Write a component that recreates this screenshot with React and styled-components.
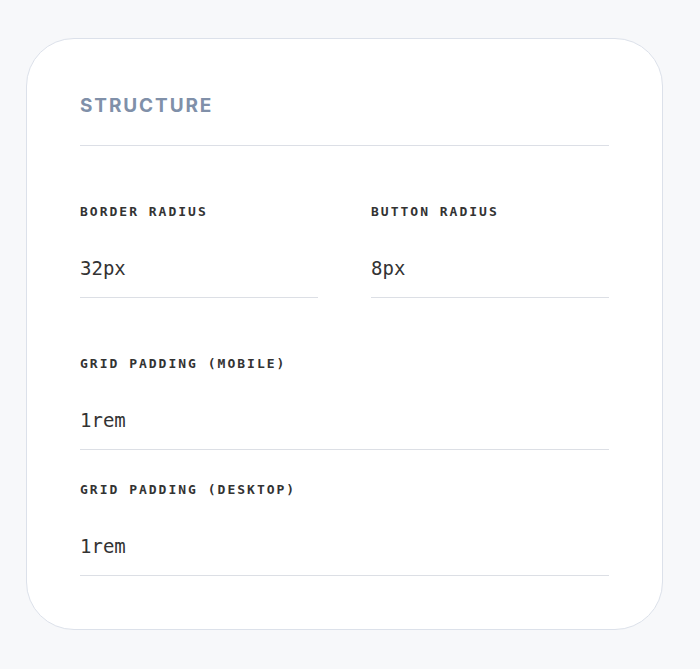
import React from 'react'
import styled, { createGlobalStyle } from 'styled-components'

const GlobalStyle = createGlobalStyle`
  html, body {
    margin: 0;
    padding: 0;
    background: #f7f8fa;
  }
  body {
    font-family: 'Inter', 'Liberation Sans', sans-serif;
  }
`

const Page = styled.div`
  padding: 38px 37px 39px 26px;
`

const Card = styled.section`
  background: #ffffff;
  border: 1px solid #dce1ea;
  border-radius: 48px;
  padding: 55px 53px 53px;
`

const SectionHeader = styled.div`
  border-bottom: 1px solid #dcdfe6;
  padding-bottom: 28px;
  margin-bottom: 56px;
`

const Heading = styled.h2`
  margin: 0;
  font-family: 'Inter', 'Liberation Sans', sans-serif;
  font-size: 19px;
  line-height: 23px;
  font-weight: 700;
  letter-spacing: 0.1em;
  color: #8090a9;
  text-transform: uppercase;
`

const Row = styled.div`
  display: grid;
  grid-template-columns: 1fr 1fr;
  column-gap: 53px;
  margin-bottom: 56px;
`

const Stack = styled.div`
  display: flex;
  flex-direction: column;
  gap: 30px;
`

const Field = styled.label`
  display: flex;
  flex-direction: column;
`

const Label = styled.span`
  font-family: 'DejaVu Sans Mono', 'Liberation Mono', monospace;
  font-size: 13px;
  line-height: 19px;
  font-weight: 700;
  letter-spacing: 2px;
  color: #333333;
  text-transform: uppercase;
  margin-bottom: 17px;
`

const Input = styled.input`
  font-family: 'DejaVu Sans Mono', 'Liberation Mono', monospace;
  font-size: 19px;
  line-height: 28px;
  color: #333333;
  background: transparent;
  border: none;
  border-bottom: 1.5px solid #dcdfe5;
  padding: 16px 0 15px;
  margin: 0;
  outline: none;
  width: 100%;
  box-sizing: border-box;
`

const FormField = ({ label, value }) => (
  <Field>
    <Label>{label}</Label>
    <Input defaultValue={value} />
  </Field>
)

export default function App() {
  return (
    <Page>
      <GlobalStyle />
      <Card>
        <SectionHeader>
          <Heading>Structure</Heading>
        </SectionHeader>
        <Row>
          <FormField label="Border Radius" value="32px" />
          <FormField label="Button Radius" value="8px" />
        </Row>
        <Stack>
          <FormField label="Grid Padding (Mobile)" value="1rem" />
          <FormField label="Grid Padding (Desktop)" value="1rem" />
        </Stack>
      </Card>
    </Page>
  )
}
